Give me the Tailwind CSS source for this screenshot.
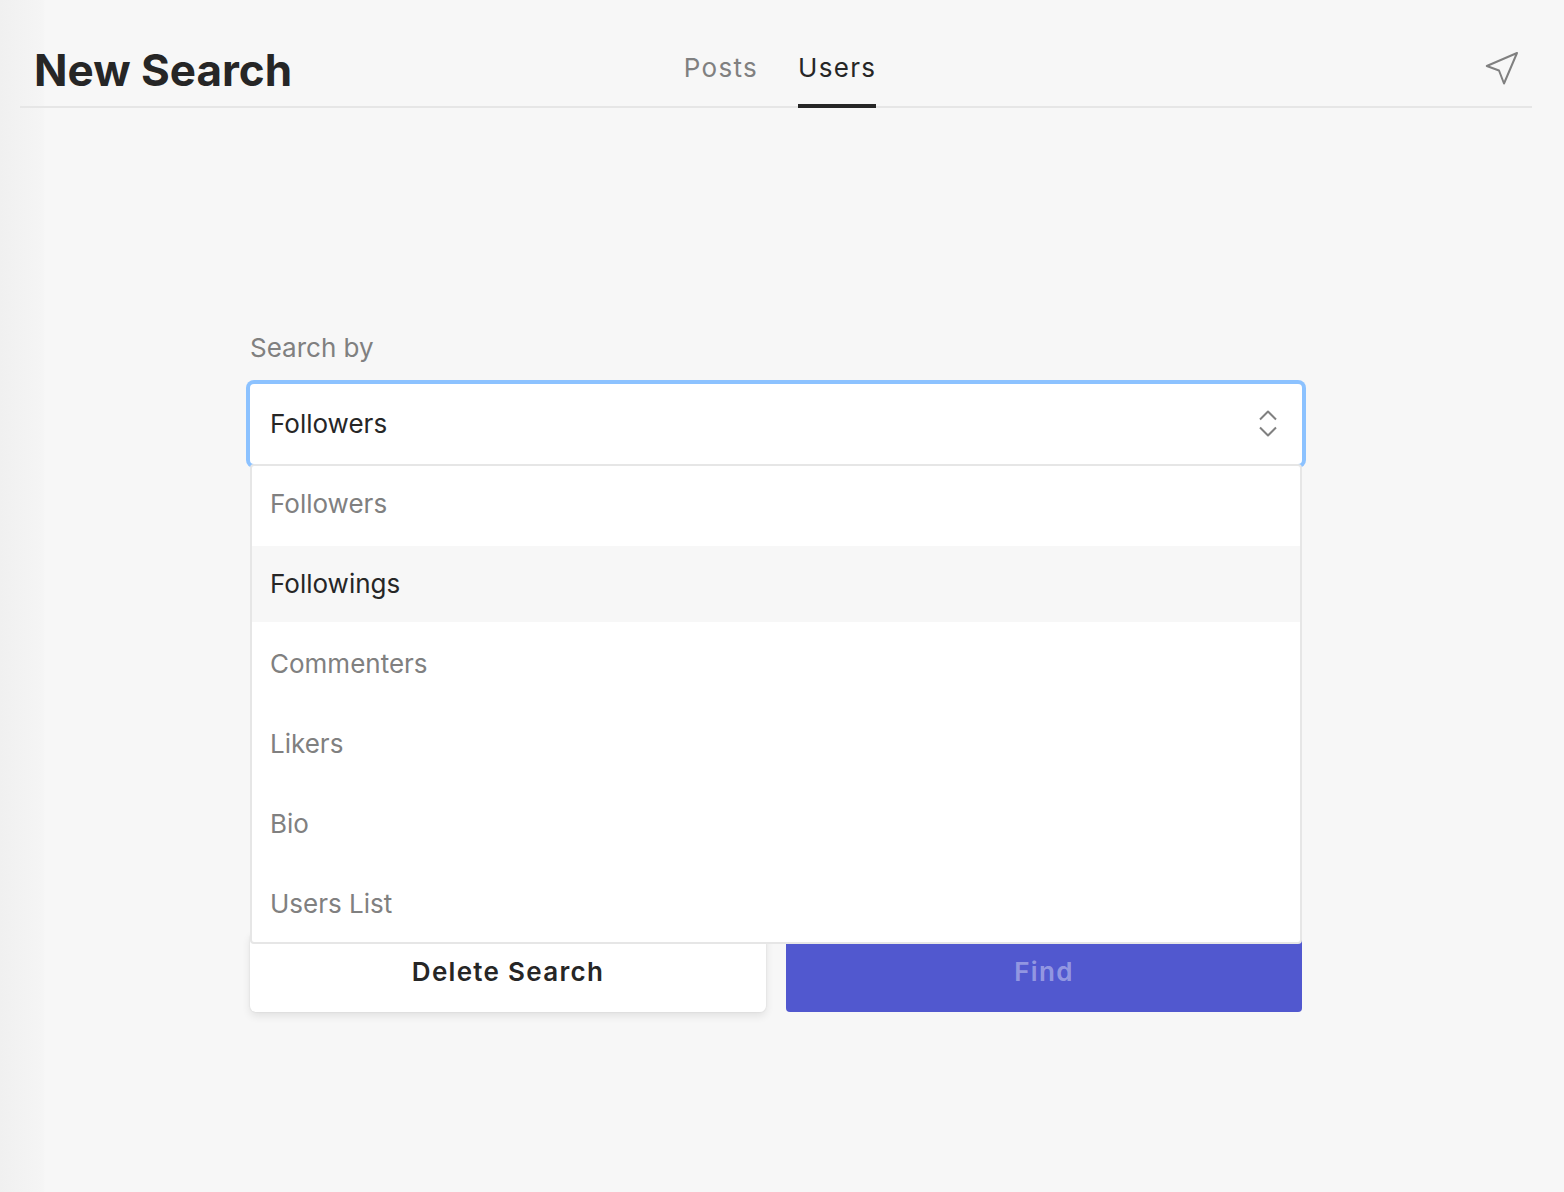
<!DOCTYPE html>
<html lang="en">
<head>
    <meta charset="UTF-8">
    <meta name="viewport" content="width=device-width, initial-scale=1.0">
    <title>New Search</title>
    <script src="https://cdn.jsdelivr.net/npm/@tailwindcss/browser@4"></script>
</head>
<body class="min-h-screen bg-[#f7f7f7] bg-[linear-gradient(to_right,#f0f0f0,#f5f5f5_43px,#f7f7f7_45px)] pl-5 pr-8 font-['Inter',sans-serif] text-[26px] leading-8 text-[#262626]">

    <!-- Header -->
    <header class="grid h-27 grid-cols-[1fr_auto_1fr] items-end border-b-2 border-[#e6e6e6]">
        <h1 class="pb-2 pl-3.5 text-[44px] leading-14 font-bold">New Search</h1>
        <nav class="-mb-0.5 flex gap-10 pl-2">
            <a href="#posts" class="border-b-4 border-transparent pb-5 tracking-wider text-[#808080]">Posts</a>
            <a href="#users" class="border-b-4 border-[#262626] pb-5 tracking-wider" aria-current="page">Users</a>
        </nav>
        <button type="button" class="mr-3 mb-5 justify-self-end text-[#808080]" aria-label="Send">
            <svg class="size-9" viewBox="0 0 36 36" fill="none" stroke="currentColor" stroke-width="2" stroke-linejoin="round">
                <path d="M33 3 2.800 16 15 20.500 20 33.500Z"/>
            </svg>
        </button>
    </header>

    <!-- Search form -->
    <main class="mx-auto mt-56 max-w-[1052px]">
        <form>
            <label for="search-by" class="mb-5 block text-[#808080]">Search by</label>
            <div class="relative">
                <select id="search-by" class="block h-20 w-full appearance-none rounded-sm bg-white px-5 ring-4 ring-[#8cc2ff] outline-none">
                    <option selected>Followers</option>
                    <option>Followings</option>
                    <option>Commenters</option>
                    <option>Likers</option>
                    <option>Bio</option>
                    <option>Users List</option>
                </select>
                <svg class="pointer-events-none absolute top-6 right-5 h-8 w-7 text-[#808080]" viewBox="0 0 28 32" fill="none" stroke="currentColor" stroke-width="2" stroke-linejoin="round">
                    <path d="M6 11.500 14 3.500 22 11.500M6 19.500 14 27.500 22 19.500"/>
                </svg>

                <!-- Open list -->
                <ul role="listbox" aria-label="Search by" class="absolute inset-x-0 top-full z-10 flex flex-col gap-1 rounded-sm border-2 border-[#e6e6e6] bg-white text-[#808080]">
                    <li role="option" aria-selected="true" class="flex h-19 items-center px-4.5">Followers</li>
                    <li role="option" aria-selected="false" class="flex h-19 items-center bg-[#f7f7f7] px-4.5 text-[#262626]">Followings</li>
                    <li role="option" aria-selected="false" class="flex h-19 items-center px-4.5">Commenters</li>
                    <li role="option" aria-selected="false" class="flex h-19 items-center px-4.5">Likers</li>
                    <li role="option" aria-selected="false" class="flex h-19 items-center px-4.5">Bio</li>
                    <li role="option" aria-selected="false" class="flex h-19 items-center px-4.5">Users List</li>
                </ul>
            </div>

            <div class="mt-117 grid grid-cols-2 gap-5">
                <button type="button" class="h-20 rounded-md bg-white font-semibold tracking-wider shadow-[0_0_2px_rgb(0_0_0/0.1),0_4px_8px_rgb(0_0_0/0.09)]">Delete Search</button>
                <button type="submit" class="h-20 rounded-sm bg-[#5158cf] font-semibold tracking-wider text-white/40" disabled>Find</button>
            </div>
        </form>
    </main>

</body>
</html>
